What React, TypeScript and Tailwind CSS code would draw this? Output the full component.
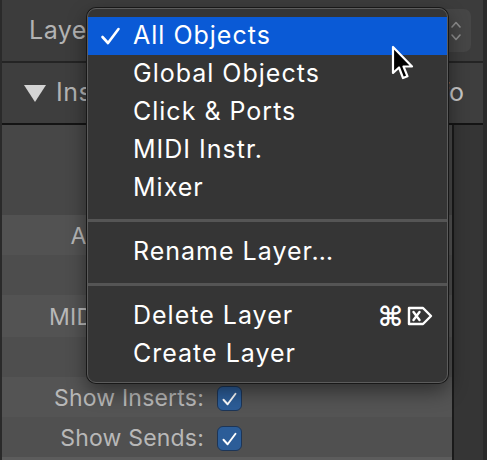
import { useState } from "react";

const layers = ["All Objects", "Global Objects", "Click & Ports", "MIDI Instr.", "Mixer"];

const rows = [
  { label: "", shade: "bg-[#474747]", h: "h-[90px]" },
  { label: "Audio Input:", shade: "bg-[#525252]", h: "h-[40px]" },
  { label: "", shade: "bg-[#4d4d4d]", h: "h-[40px]" },
  { label: "MIDI Channel:", shade: "bg-[#535353]", h: "h-[42px]" },
  { label: "", shade: "bg-[#4e4e4e]", h: "h-[40px]" },
  { label: "Show Inserts:", shade: "bg-[#545454]", h: "h-[40px]", check: true },
  { label: "Show Sends:", shade: "bg-[#505050]", h: "h-[40px]", check: true },
];

function Check({ className }: { className?: string }) {
  return (
    <svg viewBox="0 0 20 18" className={className} fill="none">
      <path d="M2 10 L7.5 16 L18 2" stroke="currentColor" strokeWidth="2.6" strokeLinecap="round" strokeLinejoin="round" />
    </svg>
  );
}

function Checkbox() {
  return (
    <span className="flex h-[25px] w-[25px] items-center justify-center rounded-[6px] border border-[#1d3556] bg-[#2c5d98] text-white">
      <Check className="h-[14px] w-[15px]" />
    </span>
  );
}

function DeleteKey() {
  return (
    <svg viewBox="0 0 26 20" className="h-[20px] w-[26px]" fill="none" stroke="currentColor" strokeWidth="2.4" strokeLinejoin="round" strokeLinecap="round">
      <path d="M2 2 H16 L24 10 L16 18 H2 Z" />
      <path d="M6.5 6 L12.5 14 M12.5 6 L6.5 14" />
    </svg>
  );
}

function Pointer() {
  return (
    <svg width="28" height="40" viewBox="-2 -2 28 40" className="absolute left-[391px] top-[45px]">
      <path
        d="M0 0 L0 26 L6 20.5 L10 31 L14.5 29.3 L10.5 19.5 L19 19.5 Z"
        fill="#000"
        stroke="#fff"
        strokeWidth="2.2"
        strokeLinejoin="round"
      />
    </svg>
  );
}

function LayerMenu() {
  const [active] = useState(0);
  return (
    <div className="absolute left-[87px] top-[8px] w-[361px] rounded-[9px] border border-[#5c5c5c] bg-[#353535] pt-[8px] pb-[9px] text-[25px] tracking-[1px] text-white shadow-[0_0_0_1px_#181818,0_8px_20px_rgba(0,0,0,0.45)]">
      {layers.map((name, i) => (
        <div key={name} className={`flex h-[38px] items-center ${i === active ? "bg-[#0a5ad6]" : ""}`}>
          <span className="flex w-[45px] pl-[12px]">
            {i === active && <Check className="h-[18px] w-[21px]" />}
          </span>
          <span>{name}</span>
        </div>
      ))}
      <div className="flex h-[26px] items-center">
        <div className="h-[3px] w-full bg-[#555555]" />
      </div>
      <div className="flex h-[38px] items-center pl-[45px]">Rename Layer…</div>
      <div className="flex h-[26px] items-center">
        <div className="h-[3px] w-full bg-[#555555]" />
      </div>
      <div className="flex h-[38px] items-center justify-between pl-[45px] pr-[14px]">
        <span>Delete Layer</span>
        <span className="flex items-center gap-[4px] tracking-normal">
          <span className="[font-family:'DejaVu_Sans',sans-serif] text-[27px] font-bold leading-none">⌘</span>
          <DeleteKey />
        </span>
      </div>
      <div className="flex h-[38px] items-center pl-[45px]">Create Layer</div>
    </div>
  );
}

export default function App() {
  return (
    <div className="relative h-[460px] w-[487px] overflow-hidden bg-[#2a2a2a] pl-[2px] pr-[4px] [font-family:Inter,'Noto_Sans',sans-serif] text-[25px]">
      <div className="flex h-full flex-col">
        {/* Layer popup row */}
        <div className="flex h-[61px] items-center bg-[#3c3c3c] pl-[27px] pr-[12px]">
          <span className="tracking-[0.5px] text-[#b3b3b3]">Layer:</span>
          <div className="ml-[16px] flex h-[43px] flex-1 items-center justify-end rounded-[7px] bg-[#464646] pr-[10px]">
            <svg viewBox="0 0 10 22" className="h-[22px] w-[10px]" fill="none" stroke="#8c8c8c" strokeWidth="1.6" strokeLinecap="round" strokeLinejoin="round">
              <path d="M1 7 L5 2.5 L9 7" />
              <path d="M1 15 L5 19.5 L9 15" />
            </svg>
          </div>
        </div>
        <div className="h-[2px] bg-[#242424]" />

        {/* Inspector header */}
        <div className="flex h-[60px] items-center justify-between bg-[#3e3e3e] pl-[22px] pr-[19px]">
          <span className="flex items-center gap-[10px] tracking-[0.5px] text-[#b3b3b3]">
            <svg viewBox="0 0 22 17" className="h-[17px] w-[22px]">
              <path d="M0 0 H22 L11 17 Z" fill="#d4d4d4" />
            </svg>
            Inspector
          </span>
          <span className="text-[#c8c8c8]">Info</span>
        </div>
        <div className="h-[2px] bg-[#141414]" />

        {/* Layer parameters */}
        <div className="flex flex-1">
          <div className="flex flex-1 flex-col bg-gradient-to-r from-[#444] via-[#4f4f4f] to-[#565656]">
            {rows.map((row, i) => (
              <div key={i} className={`flex items-center gap-[13px] pt-[3px] ${row.h} ${row.shade}`}>
                <span className="w-[202px] text-right text-[23px] tracking-[0.2px] text-[#b8b8b8]">{row.label}</span>
                {row.check && <Checkbox />}
              </div>
            ))}
            <div className="flex-1 bg-[#5c5c5c]" />
          </div>
          <div className="w-[2px] bg-[#1a1a1a]" />
          <div className="w-[29px] bg-[#353535]" />
        </div>
      </div>

      <LayerMenu />
      <Pointer />
    </div>
  );
}
